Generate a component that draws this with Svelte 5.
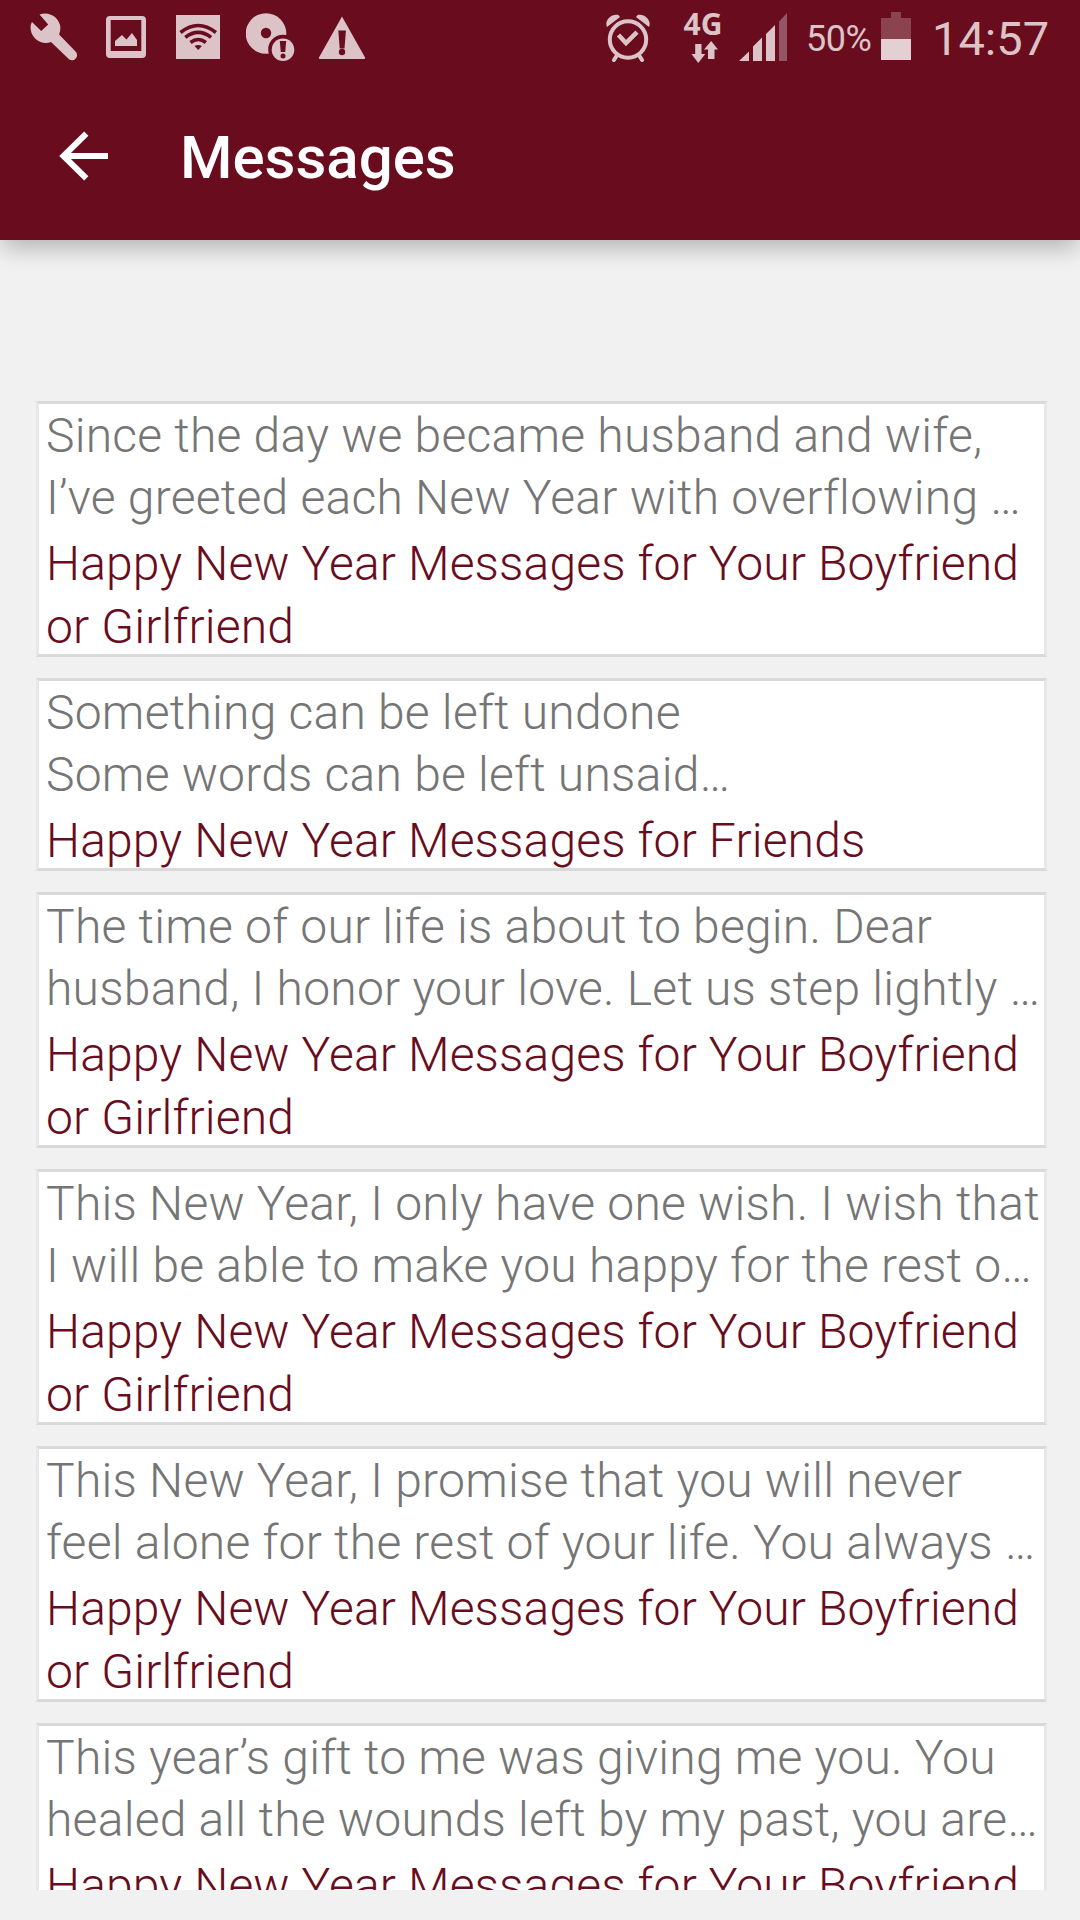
<script>
  const partner = 'Happy New Year Messages for Your Boyfriend\nor Girlfriend';
  const friends = 'Happy New Year Messages for Friends';

  let messages = [
    { text: 'Since the day we became husband and wife,\nI’ve greeted each New Year with overflowing …', category: partner },
    { text: 'Something can be left undone\nSome words can be left unsaid…', category: friends },
    { text: 'The time of our life is about to begin. Dear\nhusband, I honor your love. Let us step lightly …', category: partner },
    { text: 'This New Year, I only have one wish. I wish that\nI will be able to make you happy for the rest o…', category: partner },
    { text: 'This New Year, I promise that you will never\nfeel alone for the rest of your life. You always …', category: partner },
    { text: 'This year’s gift to me was giving me you. You\nhealed all the wounds left by my past, you are…', category: partner }
  ];
</script>

<div class="screen">
  <header>
    <div class="status-bar">
      <div class="notifications">
        <!-- wrench -->
        <svg width="52" height="50" viewBox="30 12 52 50">
          <path d="M39.5 14.5C49 11 58 17 60 25c.7 3.300.3 6.500-.9 9.400L76 52c3.500 5-2.500 10.500-7 7.300L51 42C42 45.500 32 39 30.800 30c-.5-3.500-.1-5.500 1.200-8l9.200 9 7-6.600z" />
        </svg>
        <!-- picture -->
        <svg width="45" height="50" viewBox="105 12 45 50">
          <path fill-rule="evenodd" d="M110 16h32a4 4 0 0 1 4 4v34a4 4 0 0 1-4 4h-32a4 4 0 0 1-4-4V20a4 4 0 0 1 4-4zM110.700 20v31h30.600V20z" />
          <path d="M115 46v-5l7-6 4.500 4.500L132 33l5 7v6z" />
        </svg>
        <!-- wifi -->
        <svg width="50" height="50" viewBox="173 12 50 50">
          <path d="M176 15h44v44h-44z" />
          <g class="cut-line">
            <path d="M180.500 32.500q17.700-14 35.400 0" />
            <path d="M185.300 37.300q12.900-10 25.800 0" />
            <path d="M190.500 42.500q7.700-6 15.400 0" />
          </g>
          <path class="cut" d="M194.500 46q3.700-2 7.400 0l-3.700 4z" />
        </svg>
        <!-- disc with alert -->
        <svg width="49" height="50" viewBox="246 12 49 50">
          <circle cx="266" cy="33.500" r="20.300" />
          <circle class="cut" cx="266" cy="33" r="5.200" />
          <circle class="cut" cx="283" cy="49.500" r="14.800" />
          <circle cx="283" cy="49.700" r="11.300" />
          <path class="cut" d="M279.800 41h6.400l-1 11h-4.400z" />
          <circle class="cut" cx="283" cy="56" r="2.500" />
        </svg>
        <!-- warning -->
        <svg width="48" height="50" viewBox="318 12 48 50">
          <path d="M342 16.500L365 57.500Q365.500 59 364 59H320Q318.500 59 319 57.500z" />
          <path class="cut" d="M338.300 30.500h7.600l-1.400 18h-4.800z" />
          <circle class="cut" cx="342" cy="52" r="3.200" />
        </svg>
      </div>

      <div class="system">
        <!-- alarm -->
        <svg width="46" height="50" viewBox="605 12 46 50">
          <circle class="ring" cx="628" cy="39.500" r="18.200" />
          <path class="line thick" d="M618.500 35l7.500 8 11-10.800" />
          <path class="line" d="M616.500 56l-2.500 4M639.500 56l2.500 4" />
          <path d="M607 27c-3-6 4-14 11.500-12l1.500 2zM649 27c3-6-4-14-11.500-12l-1.500 2z" />
        </svg>
        <div class="network">
          <span>4G</span>
          <svg width="30" height="24" viewBox="688 40 30 24">
            <path d="M695.200 44h6.300v10h3.700l-6.900 9-6.800-9h3.700zM708 59v-9.500h-4l7.200-8.500 6.800 8.500h-3.500V59z" />
          </svg>
        </div>
        <!-- signal -->
        <svg width="50" height="50" viewBox="738 12 50 50">
          <path d="M739 61l10-9.500V61zM753 61V46.500l9-9V61zM766 61V34l9-9v36z" />
          <path class="dim" d="M779 61V21.500l8-8.500v48z" />
        </svg>
        <span class="percent">50%</span>
        <!-- battery -->
        <svg width="30" height="50" viewBox="881 12 30 50">
          <path class="empty" d="M881 18h10v-6h10v6h10v21h-30z" />
          <path class="full" d="M881 39h30v21h-30z" />
        </svg>
        <span class="clock">14:57</span>
      </div>
    </div>

    <div class="toolbar">
      <svg width="50" height="50" viewBox="59 131 50 50">
        <path class="arrow" d="M86.300 133.700L63.500 156l22.800 22.300M64 156h44" />
      </svg>
      <h1>Messages</h1>
    </div>
  </header>

  <main>
    {#each messages as message}
      <article>
        <p class="text">{message.text}</p>
        <p class="category">{message.category}</p>
      </article>
    {/each}
  </main>
</div>

<style>
  :global(body) {
    margin: 0;
    background: #f1f1f1;
  }

  .screen {
    display: flex;
    flex-direction: column;
    box-sizing: border-box;
    width: 1080px;
    height: 1920px;
    padding-bottom: 30px;
    overflow: hidden;
    background: #f1f1f1;
    font-family: Roboto, sans-serif;
  }

  header {
    flex: none;
    height: 240px;
    background: #690d1e;
    box-shadow: 0 10px 22px -2px rgba(0, 0, 0, 0.26);
  }

  svg {
    display: block;
    flex: none;
    fill: #dcc3c8;
  }

  .status-bar {
    display: flex;
    justify-content: space-between;
    height: 75px;
    padding: 0 32px 0 30px;
    color: #dcc3c8;
  }

  .notifications,
  .system {
    display: flex;
    align-items: flex-start;
    padding-top: 12px;
  }

  .notifications {
    gap: 23px;
  }

  .cut {
    fill: #690d1e;
  }

  .cut-line {
    fill: none;
    stroke: #690d1e;
    stroke-width: 3.6;
  }

  .ring,
  .line {
    fill: none;
    stroke: #dcc3c8;
    stroke-width: 4;
    stroke-linecap: round;
  }

  .thick {
    stroke-width: 4.5;
    stroke-linecap: butt;
  }

  .dim {
    fill: #935563;
  }

  .empty {
    fill: #8b4350;
  }

  .full {
    fill: #e3d0d4;
  }

  .network {
    display: flex;
    flex-direction: column;
    align-items: center;
    width: 42px;
    margin: 0 14px 0 31px;
  }

  .network span {
    height: 28px;
    font: 700 30px/24px "Open Sans", sans-serif;
  }

  .percent {
    width: 66px;
    margin: 0 9px 0 18px;
    font-size: 36px;
    line-height: 54px;
    letter-spacing: -0.5px;
  }

  .clock {
    width: 116px;
    margin-left: 21px;
    font-size: 47px;
    line-height: 53px;
  }

  .toolbar {
    display: flex;
    align-items: center;
    gap: 71px;
    height: 162px;
    padding-left: 59px;
  }

  .arrow {
    fill: none;
    stroke: #fff;
    stroke-width: 6;
  }

  h1 {
    margin: 0;
    padding-top: 4px;
    color: #fff;
    font-size: 60px;
    font-weight: 500;
    line-height: 70px;
  }

  main {
    display: flex;
    flex: 1;
    flex-direction: column;
    gap: 21px;
    min-height: 0;
    padding: 161px 33px 0 36px;
    overflow: hidden;
    clip-path: inset(0);
  }

  article {
    flex: none;
    box-sizing: border-box;
    padding: 0 7px;
    border: 3px solid #d9d9d9;
    border-right-color: #e8e8e8;
    border-left-color: #e8e8e8;
    background: #fff;
  }

  p {
    margin: 0;
    font-size: 48px;
    font-weight: 300;
    white-space: pre;
  }

  .text {
    padding-top: 1px;
    color: #757575;
    line-height: 62px;
    letter-spacing: 0.24px;
  }

  .category {
    margin: 3px 0 -4px;
    color: #690d1e;
    line-height: 63px;
    letter-spacing: 0.15px;
  }
</style>
